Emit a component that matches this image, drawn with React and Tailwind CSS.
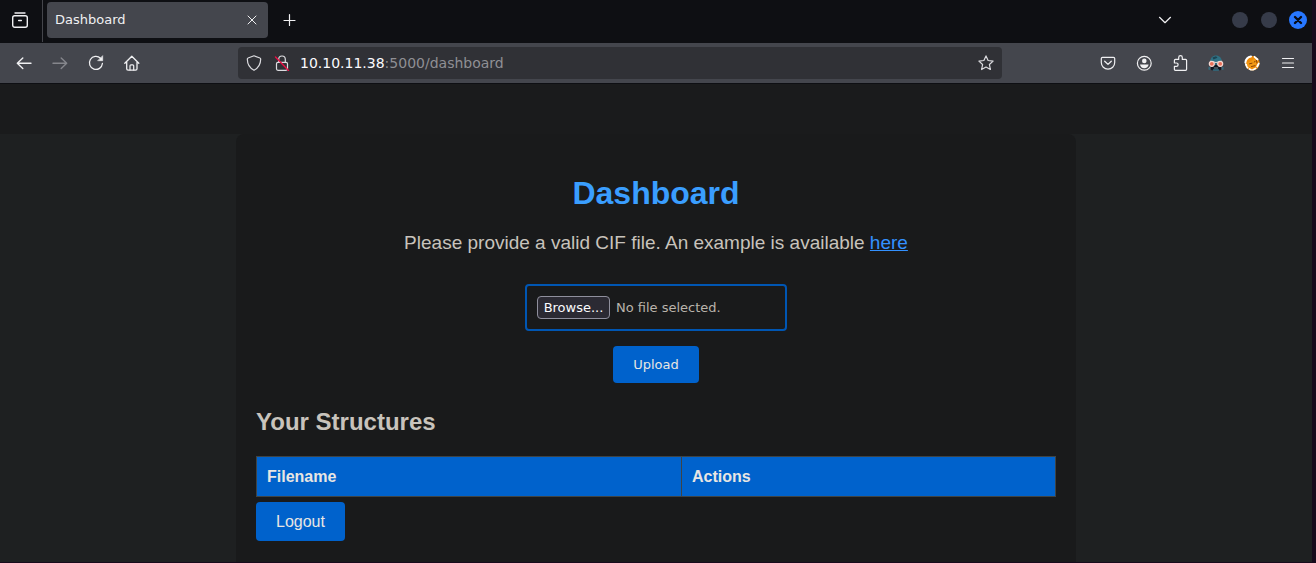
import { useRef, useState } from "react";

function Icon({ children, size = 16, className = "" }) {
  return (
    <svg
      width={size}
      height={size}
      viewBox="0 0 16 16"
      fill="none"
      stroke="currentColor"
      strokeWidth="1.2"
      strokeLinecap="round"
      strokeLinejoin="round"
      aria-hidden="true"
      className={"shrink-0 " + className}
    >
      {children}
    </svg>
  );
}

function ToolButton({ label, children, disabled = false }) {
  return (
    <button
      type="button"
      aria-label={label}
      disabled={disabled}
      className="flex h-8 w-9 items-center justify-center text-[#f0f0f2] disabled:text-[#85868c]"
    >
      {children}
    </button>
  );
}

function TabStrip() {
  return (
    <div className="flex h-[43px] items-start bg-[#0e0f13] text-[#f0f0f2]">
      <div className="flex h-[42px] w-[43px] items-center justify-center border-r border-[#44454b] pr-0.5 pb-0.5">
        <button type="button" aria-label="View recent browsing">
          <Icon>
            <path d="M3 1h10" strokeWidth="1.3" />
            <rect x="0.7" y="3.7" width="14.6" height="11.6" rx="2" strokeWidth="1.4" />
            <path d="M6.6 8.5h2.8" strokeWidth="1.3" />
          </Icon>
        </button>
      </div>
      <div className="mt-0.5 ml-1 flex h-9 w-[221px] items-center justify-between rounded bg-[#44464d] px-2 text-[13px]">
        <span>Dashboard</span>
        <button type="button" aria-label="Close tab" className="flex w-4 justify-center">
          <Icon>
            <path d="M4 4l8 8M12 4l-8 8" strokeWidth="1" />
          </Icon>
        </button>
      </div>
      <button type="button" aria-label="Open a new tab" className="ml-1 flex h-10 w-9 items-center justify-center">
        <Icon>
          <path d="M7.500 2.500v11M2 8.500h11" />
        </Icon>
      </button>
      <div className="ml-auto flex h-10 items-center pr-[5px]">
        <button type="button" aria-label="List all tabs" className="mr-[59px]">
          <Icon>
            <path d="M2.500 5.300L8 10.700l5.500-5.400" />
          </Icon>
        </button>
        <div className="flex items-center gap-3">
          <button type="button" aria-label="Minimize" className="size-4 rounded-full bg-[#363b49]" />
          <button type="button" aria-label="Maximize" className="ml-px size-4 rounded-full bg-[#363b49]" />
          <button
            type="button"
            aria-label="Close window"
            className="flex size-[18px] items-center justify-center rounded-full bg-[#2777ff] text-[#080c16]"
          >
            <Icon>
              <path d="M5 5l6 6M11 5l-6 6" strokeWidth="2.4" />
            </Icon>
          </button>
        </div>
      </div>
    </div>
  );
}

function AddressBar() {
  return (
    <div className="mx-22 flex h-8 flex-1 items-center rounded bg-[#303136] px-2 text-[#dcdce0]">
      <Icon>
        <path d="M8 .8l5.900 2.200c.5.200.8.600.8 1.100-.1 5.200-2.200 9-6.700 11.200C3.500 13.100 1.400 9.300 1.300 4.100c0-.5.300-.9.800-1.100z" />
      </Icon>
      <Icon className="ml-3">
        <rect x="2.500" y="7.300" width="11" height="8" rx="1.500" />
        <path d="M4.700 7V4.300a3.300 3.300 0 0 1 6.600 0V7" />
        <path d="M1.500 2l13 13.500" stroke="#e80f45" strokeWidth="1.400" />
      </Icon>
      <div
        role="textbox"
        aria-label="Address"
        contentEditable
        suppressContentEditableWarning
        className="ml-2.5 flex-1 text-sm text-[#8f8f94] outline-none"
      >
        <span className="text-[#fbfbfe]">10.10.11.38</span>:5000/dashboard
      </div>
      <button type="button" aria-label="Bookmark this page">
        <Icon>
          <path d="M8 .9l2.100 4.600 5 .6-3.700 3.400 1 5L8 12l-4.400 2.500 1-5L.9 6.100l5-.6z" />
        </Icon>
      </button>
    </div>
  );
}

function Toolbar() {
  return (
    <div className="flex h-[41px] items-center border-b border-[#0e0f13] bg-[#44464d] px-1.5">
      <ToolButton label="Back">
        <Icon>
          <path d="M15 8.300H1.500M6.800 3L1.300 8.300l5.500 5.200" strokeWidth="1.400" />
        </Icon>
      </ToolButton>
      <ToolButton label="Forward" disabled>
        <Icon>
          <path d="M1 8.300h13.500M9.200 3l5.500 5.300-5.500 5.200" strokeWidth="1.400" />
        </Icon>
      </ToolButton>
      <ToolButton label="Reload">
        <Icon>
          <path d="M12.500 3.300A6.500 6.500 0 1 0 14.400 8.500" strokeWidth="1.300" />
          <path d="M14.700 1v4.700H10z" fill="currentColor" strokeWidth="0.600" />
        </Icon>
      </ToolButton>
      <ToolButton label="Home">
        <Icon>
          <path d="M.8 8.200L7.800 1.200l7 7M2.700 6.800v7c0 .9.600 1.400 1.400 1.400h7.500c.8 0 1.400-.5 1.400-1.400v-7" strokeWidth="1.300" />
          <path d="M6 15v-4.200c0-.6.400-1 1-1h1.700c.6 0 1 .4 1 1V15" />
        </Icon>
      </ToolButton>
      <AddressBar />
      <ToolButton label="Save to Pocket">
        <Icon>
          <path d="M2.500 2.300h11c.7 0 1.200.5 1.200 1.200v4c0 3.800-3 6.600-6.700 6.600S1.300 11.300 1.300 7.500v-4c0-.7.500-1.200 1.200-1.200z" />
          <path d="M4.700 6.200L8 9.400l3.300-3.200" strokeWidth="1.300" />
        </Icon>
      </ToolButton>
      <ToolButton label="Account">
        <Icon>
          <circle cx="8.300" cy="8.300" r="6.900" />
          <circle cx="8.300" cy="5.900" r="2.300" fill="currentColor" stroke="none" />
          <path d="M4 9.400h8.600c-.3 2.400-2 3.800-4.300 3.800S4.300 11.800 4 9.400z" fill="currentColor" stroke="none" />
        </Icon>
      </ToolButton>
      <ToolButton label="Extensions">
        <Icon>
          <path d="M2.400 5.400c0-.6.400-1 1-1h3.300V2.500a1.800 1.800 0 0 1 3.600 0v1.900h3.300c.6 0 1 .4 1 1v8.900c0 .6-.4 1-1 1H3.400c-.6 0-1-.4-1-1v-2.900h2a1.700 1.700 0 0 0 0-3.400h-2z" />
        </Icon>
      </ToolButton>
      <ToolButton label="Wappalyzer">
        <Icon>
          <path d="M2 6.500C2.500 2.800 4.700.5 8 .5s5.500 2.300 6 6v3H2z" fill="#2f7184" stroke="none" />
          <path d="M4.500 2.500L8 1.300l1.500 1.500-4 1.700z" fill="#1b4453" stroke="none" />
          <path d="M3 10h10v4c0 .8-.5 1.300-1.300 1.300H4.300c-.8 0-1.300-.5-1.300-1.300z" fill="#0f1620" stroke="none" />
          <path d="M1.200 12.500v1.800M14.800 12.500v1.800M5.500 15h5" stroke="#347084" strokeWidth="1.400" />
          <path d="M6.300 13h3.400" stroke="#8faab3" strokeWidth="0.800" />
          <path d="M2.500 6.300L8 7.500l5.500-1.200" stroke="#f4d8d2" strokeWidth="1" />
          <circle cx="3.800" cy="8.800" r="2.500" fill="#ea7059" stroke="#f4d8d2" strokeWidth="1.200" />
          <circle cx="12.200" cy="8.800" r="2.500" fill="#ea7059" stroke="#f4d8d2" strokeWidth="1.200" />
        </Icon>
      </ToolButton>
      <ToolButton label="FoxyProxy">
        <Icon>
          <circle cx="8.300" cy="8.300" r="7.300" fill="#f08c08" stroke="none" />
          <path d="M1.400 7.500C1.700 4.500 4 2 7 1.500M3.500 12.500L2 9.500" stroke="#fff" strokeWidth="2" />
          <path d="M10.500 1.800l3 2.700M14.700 8.500l-1.500 3M11.500 13.500l-2.500 1.300M5.500 14l1.500.8" stroke="#fff" strokeWidth="1.800" />
          <path d="M3 7.500l4-1.300L10.500 3l1.800 2.500-.3 4-3.500 3-5-.8z" fill="#f39a16" stroke="none" />
          <path d="M5.500 8.800l2.500-.6M10.200 7l1-.6M7.500 11.500l3.500-.8M12.500 5.500l.5 2.500" stroke="#8a4305" strokeWidth="1" />
          <path d="M4 6.200l3-2.400" stroke="#f08c08" strokeWidth="1.200" />
        </Icon>
      </ToolButton>
      <ToolButton label="Open application menu">
        <Icon>
          <path d="M2.500 3.500h11M2.500 8h11M2.500 12.500h11" strokeWidth="1.200" />
        </Icon>
      </ToolButton>
    </div>
  );
}

function UploadForm() {
  const inputRef = useRef(null);
  const [fileName, setFileName] = useState("No file selected.");

  return (
    <form className="mt-[30px] flex flex-col items-center text-[13px]" onSubmit={(e) => e.preventDefault()}>
      <div className="flex h-[47px] w-[262px] items-center gap-1.5 rounded border-2 border-[#0056b3] px-2.5 text-[#bab4ab]">
        <input
          ref={inputRef}
          id="structure-file"
          type="file"
          accept=".cif"
          className="hidden"
          onChange={(e) => setFileName(e.target.files[0]?.name ?? "No file selected.")}
        />
        <button
          type="button"
          onClick={() => inputRef.current.click()}
          className="h-[23px] w-[73px] rounded border border-[#8f8f9d] bg-[#2b2a33] text-center leading-5 text-[#fbfbfe]"
        >
          Browse...
        </button>
        <label htmlFor="structure-file" className="truncate">
          {fileName}
        </label>
      </div>
      <button type="submit" className="mt-[15px] h-[37px] rounded bg-[#0062cc] px-5 text-[#e8e6e3]">
        Upload
      </button>
    </form>
  );
}

function DashboardPage() {
  return (
    <div className="flex flex-1 flex-col bg-[#1e2021] font-['Liberation_Sans',Arial,sans-serif] text-[#c8c3bc]">
      <div className="h-[50px] bg-[#1a1b1c]" />
      <main className="mx-auto w-full max-w-[840px] flex-1 rounded-t-lg bg-[#191a1b] px-5 pt-[41px] pb-[21px]">
        <h1 className="text-center text-[32px] leading-9 font-bold text-[#3a9eff]">Dashboard</h1>
        <p className="mt-[21px] text-center text-[19px] leading-[22px]">
          Please provide a valid CIF file. An example is available{" "}
          <a href="#example" className="text-[#3391ff] underline">
            here
          </a>
        </p>
        <div className="font-['DejaVu_Sans',sans-serif]">
          <UploadForm />
        </div>
        <h2 className="mt-[25px] text-2xl leading-7 font-bold">Your Structures</h2>
        <table className="mt-5 w-full border-collapse text-left text-base text-[#e8e6e3]">
          <thead>
            <tr className="h-10 bg-[#0062cc]">
              <th className="w-[53.2%] border border-[#3e4446] px-2.5 font-bold">Filename</th>
              <th className="border border-[#3e4446] px-2.5 font-bold">Actions</th>
            </tr>
          </thead>
        </table>
        <a
          href="#logout"
          className="mt-[5px] inline-flex h-[39px] items-center rounded bg-[#0062cc] px-5 text-base text-[#e8e6e3]"
        >
          Logout
        </a>
      </main>
    </div>
  );
}

export default function App() {
  return (
    <div className="flex min-h-screen flex-col bg-[#170a1c] pr-1 pb-px font-['DejaVu_Sans',sans-serif]">
      <TabStrip />
      <Toolbar />
      <DashboardPage />
    </div>
  );
}
